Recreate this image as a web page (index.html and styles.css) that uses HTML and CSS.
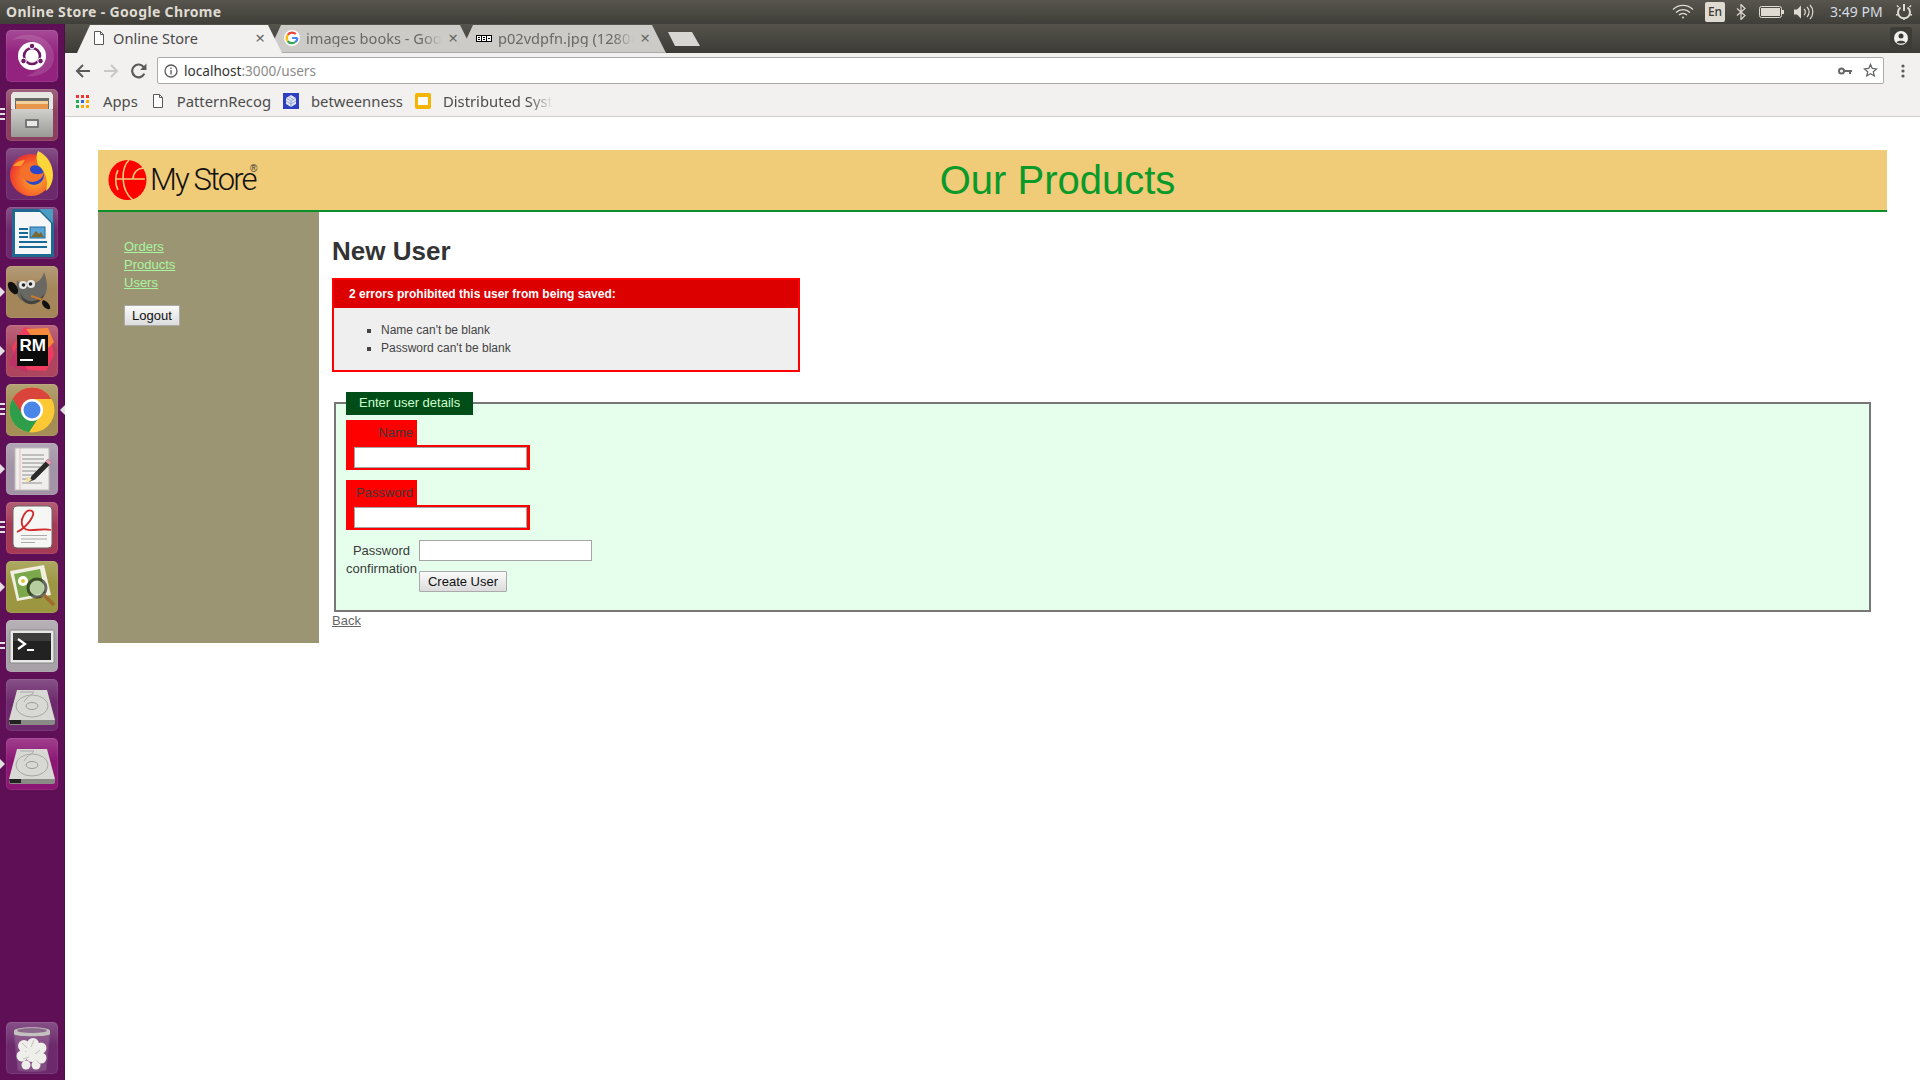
FILE: index.html
```html
<!DOCTYPE html>
<html lang="en">
<head>
<meta charset="utf-8">
<title>Online Store</title>
<link rel="stylesheet" href="styles.css">
</head>
<body>
<div class="screen">
  <header class="topbar">
    <span class="wintitle">Online Store - Google Chrome</span>
    <div class="tray">
      <svg class="t-wifi" width="22" height="16" viewBox="0 0 22 16" fill="none" stroke="#dfdbd2" stroke-width="1.3"><path d="M1 5.500a14 14 0 0 1 20 0"/><path d="M4 8.500a10 10 0 0 1 14 0"/><path d="M7 11a6 6 0 0 1 8 0"/><circle cx="11" cy="13.600" r="1" fill="#dfdbd2" stroke="none"/></svg>
      <span class="t-en">En</span>
      <svg class="t-bt" width="10" height="16" viewBox="0 0 10 16" fill="none" stroke="#dfdbd2" stroke-width="1.2"><path d="M1 4.500l8 7-4 4V.5l4 4-8 7"/></svg>
      <svg class="t-batt" width="25" height="12" viewBox="0 0 25 12"><rect x=".5" y=".5" width="22" height="11" rx="2" fill="none" stroke="#dfdbd2"/><rect x="2" y="2" width="19" height="8" fill="#dfdbd2"/><rect x="23" y="4" width="2" height="4" fill="#dfdbd2"/></svg>
      <svg class="t-vol" width="21" height="16" viewBox="0 0 21 16" fill="none" stroke="#dfdbd2" stroke-width="1.2"><path d="M1 5.500h3l4-4v13l-4-4H1z" fill="#dfdbd2" stroke="none"/><path d="M11 5a4 4 0 0 1 0 6M14 3a7 7 0 0 1 0 10M17 1a10 10 0 0 1 0 14"/></svg>
      <span class="t-time">3:49 PM</span>
      <svg class="t-gear" width="18" height="18" viewBox="0 0 18 18" fill="none" stroke="#dfdbd2" stroke-width="2"><path d="M5.500 4.500a6 6 0 1 0 7 0"/><path d="M9 1v7"/><path d="M2 2.500l1.500 1.500M16 2.500L14.500 4M1 12l2-.5M17 12l-2-.5M9 17v-2" stroke-width="1.600"/></svg>
    </div>
  </header>
  <div class="desktop">
    <nav class="dock">
      <div class="tile tile-ubuntu">
        <svg viewBox="0 0 52 52"><path d="M6 10C18 0 44 4 48 24 50 40 34 48 20 46 36 42 42 26 32 16 24 8 12 8 6 10Z" fill="#fff" opacity=".13"/><circle cx="26" cy="26" r="14" fill="#fff"/><circle cx="26" cy="26" r="8" fill="none" stroke="#6e1c66" stroke-width="2.600"/><circle cx="26" cy="16" r="2.800" fill="#6e1c66" stroke="#fff"/><circle cx="17.500" cy="31" r="2.800" fill="#6e1c66" stroke="#fff"/><circle cx="34.500" cy="31" r="2.800" fill="#6e1c66" stroke="#fff"/></svg>
      </div>
      <div class="tile tile-files has-pips-3">
        <svg viewBox="0 0 52 52"><defs><linearGradient id="cab" x1="0" y1="0" x2="0" y2="1"><stop offset="0" stop-color="#cfcfcb"/><stop offset="1" stop-color="#9a9a96"/></linearGradient></defs><path d="M7 3h38l2 3v14H5V6z" fill="#e6e6e2"/><rect x="9" y="9" width="34" height="11" fill="#6a6a66"/><rect x="10" y="12" width="32" height="3" fill="#f3cf9c"/><rect x="10" y="15" width="32" height="5" fill="#e8964c"/><rect x="5" y="20" width="42" height="28" rx="1.500" fill="url(#cab)"/><rect x="19" y="30" width="14" height="9" rx="1" fill="#777"/><rect x="21" y="32" width="10" height="5" fill="#e8e8e8"/></svg>
        <i class="pips"></i>
      </div>
      <div class="tile tile-fox">
        <svg viewBox="0 0 52 52"><defs><radialGradient id="ffx" cx=".6" cy=".6" r=".7"><stop offset="0" stop-color="#fdb32d"/><stop offset=".6" stop-color="#f5602a"/><stop offset="1" stop-color="#e8262f"/></radialGradient></defs><circle cx="25" cy="27" r="21" fill="url(#ffx)"/><path d="M32 3c9 4 15 13 15 24 0 7-3 13-7 16 3-10-1-21-8-26-2-5-2-10 0-14Z" fill="#ffd63a"/><circle cx="28" cy="27" r="10" fill="#2a47c8"/><path d="M14 22c4-8 12-8 16-5-6 0-7 4-5 7 3 3 10 3 13 0-1 8-10 12-16 9-5-2-8-6-8-11Z" fill="#f5702a"/><path d="M7 18c3-4 8-6 12-6l-4 6z" fill="#ff9b2f"/></svg>
      </div>
      <div class="tile tile-purple">
        <svg viewBox="0 0 52 52"><path d="M6 2h30l12 12v36H6z" fill="#1f6a92"/><path d="M33 2h14v14z" fill="#4a9cc0"/><path d="M9 5h25l11 11v31H9z" fill="#f4f6f8"/><g fill="#1a6a98"><rect x="13" y="21" width="9" height="2"/><rect x="13" y="25" width="9" height="2"/><rect x="13" y="29" width="9" height="2"/><rect x="13" y="34" width="28" height="2"/><rect x="13" y="39" width="28" height="2"/></g><rect x="24" y="20" width="15" height="11" fill="#5aa4d8" stroke="#1a6a98"/><path d="M25 30l5-6 3 3 2-2 3 5z" fill="#7a6a30"/></svg>
      </div>
      <div class="tile tile-gimp has-arrow">
        <svg viewBox="0 0 52 52"><path d="M11 14c2 4 6 3 10 3h8c4-1 8-6 9-11 3 8 4 15 2 21-3 7-10 11-18 10-6-1-11-5-12-12z" fill="#6a6862"/><path d="M14 26c3 8 10 11 17 8 3-1 5-3 7-6-1 7-8 11-15 10-5-1-8-5-9-12z" fill="#45433e"/><ellipse cx="7" cy="22" rx="4" ry="7" transform="rotate(-35 7 22)" fill="#111"/><circle cx="17" cy="19" r="4" fill="#e8e8e8"/><circle cx="25" cy="18" r="4" fill="#e8e8e8"/><circle cx="17.500" cy="19" r="1.800" fill="#222"/><circle cx="24.500" cy="18" r="1.800" fill="#222"/><path d="M25 30l12 4" stroke="#c87a30" stroke-width="2"/><path d="M37 34c4 1 8 5 7 9-4 1-8-3-8-7z" fill="#111"/></svg>
        <i class="arrow"></i>
      </div>
      <div class="tile tile-rm has-arrow">
        <svg viewBox="0 0 52 52"><path d="M6 22L18 2l26 6 4 22-8 16-28-2z" fill="#ef3b5d"/><path d="M20 4l22-1 6 14-10 10z" fill="#f58a3c"/><path d="M3 40l9-22 10 30z" fill="#c22a6a" opacity=".7"/><rect x="11" y="10" width="31" height="31" fill="#0b0b0b"/><text x="13.500" y="26" class="rm-text">RM</text><rect x="14" y="34" width="13" height="2" fill="#fff"/></svg>
        <i class="arrow"></i>
      </div>
      <div class="tile tile-chrome has-pips-3 has-active">
        <svg viewBox="0 0 52 52"><circle cx="26" cy="26" r="22.500" fill="#fcc934"/><path d="M26 3.500A22.500 22.500 0 0 0 6.500 14.800L15 30l11-15h19.500A22.500 22.500 0 0 0 26 3.500Z" fill="#d9453c"/><path d="M6.500 14.800A22.500 22.500 0 0 0 23 48.300L33 33H18z" fill="#2e9e4b"/><circle cx="26" cy="26" r="11" fill="#fff"/><circle cx="26" cy="26" r="8.500" fill="#4a86e8"/></svg>
        <i class="pips"></i><i class="active-arrow"></i>
      </div>
      <div class="tile tile-grey has-arrow">
        <svg viewBox="0 0 52 52"><rect x="9" y="5" width="34" height="42" fill="#efeeec" stroke="#bbb"/><path d="M14 5v42" stroke="#e8a0a0" stroke-width=".6"/><g stroke="#777" stroke-width=".8"><path d="M16 12h22M16 16h22M16 20h22M16 24h18M16 28h14M16 32h12M16 36h10M16 40h20"/></g><path d="M42 16l4 3.500-17 17-6 2.500 2.500-6z" fill="#2a2a2a"/><path d="M42 16l4 3.500-2.500 2.500-4-3.500z" fill="#e89ab0"/><path d="M21.500 33l-2.500 7 7-3z" fill="#f2e0a0"/></svg>
        <i class="arrow"></i>
      </div>
      <div class="tile tile-evince has-pips-3">
        <svg viewBox="0 0 52 52"><rect x="7" y="4" width="39" height="42" rx="4" fill="#f6f6f4" stroke="#666"/><path d="M11 30C20 26 31 12 26 9 20 6 13 18 17 25 22 32 35 25 45 28" fill="none" stroke="#d02a2a" stroke-width="1.800"/><path d="M15 33.500h26M15 37h26M15 40.500h14" stroke="#aaa" stroke-width="1"/></svg>
        <i class="pips"></i>
      </div>
      <div class="tile tile-olive has-arrow">
        <svg viewBox="0 0 52 52"><path d="M4 10L38 4l7 30-34 6z" fill="#f0efe0"/><path d="M8 13l26-5 5 24-26 5z" fill="#7aa84a"/><circle cx="17" cy="20" r="5" fill="#fff"/><circle cx="17" cy="20" r="2" fill="#e8c030"/><circle cx="31" cy="27" r="9" fill="#dfe8d8" opacity=".6" stroke="#111" stroke-width="3"/><path d="M38 34l10 10" stroke="#a06a30" stroke-width="3.500"/></svg>
        <i class="arrow"></i>
      </div>
      <div class="tile tile-term has-pips-2">
        <svg viewBox="0 0 52 52"><rect x="4" y="10" width="44" height="33" rx="1.500" fill="#e8e8e6" stroke="#888"/><rect x="7" y="13" width="38" height="27" fill="#222"/><rect x="7" y="13" width="38" height="8" fill="#3d3d3b"/><path d="M12 19l7 5-7 5" fill="none" stroke="#fff" stroke-width="2.200"/><path d="M21 30h7" stroke="#fff" stroke-width="2"/></svg>
        <i class="pips"></i>
      </div>
      <div class="tile tile-purple">
        <svg viewBox="0 0 52 52"><use href="#disk"/></svg>
      </div>
      <div class="tile tile-magenta has-arrow">
        <svg viewBox="0 0 52 52"><defs><g id="disk"><path d="M11 11h30l8 30H3z" fill="#d8d8d4"/><path d="M3 41h46v3a2 2 0 0 1-2 2H5a2 2 0 0 1-2-2z" fill="#8a8a86"/><path d="M3 41h12v4H4z" fill="#222"/><ellipse cx="26" cy="27" rx="16" ry="11" fill="none" stroke="#a8a8a4"/><ellipse cx="26" cy="27" rx="6" ry="3.500" fill="none" stroke="#999"/><path d="M14 13h14c-3 4-8 5-10 10" fill="none" stroke="#aaa"/></g></defs><use href="#disk"/></svg>
        <i class="arrow"></i>
      </div>
      <div class="dock-spacer"></div>
      <div class="tile tile-purple">
        <svg viewBox="0 0 52 52"><path d="M8 10h36l-4 38c-4 2-24 2-28 0z" fill="#fff" opacity=".16" stroke="#bbb"/><path d="M8 9c0-5 36-5 36 0v3c0 3-36 3-36 0z" fill="#c4c2bf"/><ellipse cx="26" cy="8.500" rx="15" ry="2.500" fill="#8c6a8c"/><g fill="#eeeeea"><circle cx="18" cy="24" r="6"/><circle cx="27" cy="22" r="6"/><circle cx="35" cy="26" r="5.500"/><circle cx="16" cy="34" r="5.500"/><circle cx="26" cy="33" r="7"/><circle cx="35" cy="36" r="5.500"/><circle cx="20" cy="43" r="4.500"/><circle cx="30" cy="43" r="4.500"/></g><path d="M16 21l5 5M28 18l-3 7M34 28l-5 4M17 37l6-2M31 39l3 3" fill="none" stroke="#b5b5b0" stroke-width=".8"/></svg>
      </div>
    </nav>
    <div class="browser">
      <div class="tabstrip">
        <div class="tab tab-active">
          <svg class="favicon" width="12" height="14" viewBox="0 0 12 14" fill="#fff" stroke="#5a5a5a"><path d="M1.500.5h6l3 3v10h-9z"/><path d="M7.500.5v3h3" fill="none"/></svg>
          <span class="tab-title">Online Store</span>
          <span class="tab-x">×</span>
        </div>
        <div class="tab">
          <svg class="favicon favicon-wide" width="16" height="16" viewBox="0 0 16 16"><circle cx="8" cy="8" r="8" fill="#fff"/><path d="M13.500 8H8.200" fill="none" stroke="#4285f4" stroke-width="2.200"/><path d="M13.400 8a5.500 5.500 0 0 1-2 4" fill="none" stroke="#4285f4" stroke-width="2.200"/><path d="M3.700 4.800A5.500 5.500 0 0 1 11.800 4" fill="none" stroke="#ea4335" stroke-width="2.200"/><path d="M3.700 4.800a5.500 5.500 0 0 0 0 6.400" fill="none" stroke="#fbbc05" stroke-width="2.200"/><path d="M3.700 11.200a5.500 5.500 0 0 0 7.700 .8" fill="none" stroke="#34a853" stroke-width="2.200"/></svg>
          <span class="tab-title">images books - Google</span>
          <span class="tab-x">×</span>
        </div>
        <div class="tab">
          <svg class="favicon favicon-wide" width="16" height="7" viewBox="0 0 16 7"><rect width="16" height="7" fill="#000"/><g fill="#fff"><rect x="1" y="1" width="4" height="5"/><rect x="6" y="1" width="4" height="5"/><rect x="11" y="1" width="4" height="5"/></g><g fill="#000"><rect x="2" y="2" width="2" height="1"/><rect x="2" y="4" width="2" height="1"/><rect x="7" y="2" width="2" height="1"/><rect x="7" y="4" width="2" height="1"/><rect x="12" y="3" width="2" height="1"/></g></svg>
          <span class="tab-title">p02vdpfn.jpg (1280×720)</span>
          <span class="tab-x">×</span>
        </div>
        <div class="newtab"></div>
        <div class="profile">
          <svg width="16" height="16" viewBox="0 0 16 16"><circle cx="8" cy="8" r="7" fill="#f2f1f0"/><circle cx="8" cy="6" r="2.500" fill="#3d3c37"/><path d="M3.500 12.500c1-2.500 8-2.500 9 0-2 1.500-7 1.500-9 0Z" fill="#3d3c37"/></svg>
        </div>
      </div>
      <div class="toolbar">
        <svg class="nav-back" width="16" height="14" viewBox="0 0 16 14" fill="none" stroke="#5a5a5a" stroke-width="2"><path d="M15 7H2M8 1L2 7l6 6"/></svg>
        <svg class="nav-fwd" width="16" height="14" viewBox="0 0 16 14" fill="none" stroke="#c8c8c8" stroke-width="2"><path d="M1 7h13M8 1l6 6-6 6"/></svg>
        <svg class="nav-reload" width="16" height="16" viewBox="0 0 15 15" fill="none" stroke="#5a5a5a" stroke-width="2"><path d="M12.500 10A6 6 0 1 1 12 4"/><path d="M14.500 0.500v6h-6z" fill="#5a5a5a" stroke="none"/></svg>
        <div class="omnibox">
          <svg class="omni-info" width="14" height="14" viewBox="0 0 14 14" fill="none" stroke="#5a5a5a" stroke-width="1.300"><circle cx="7" cy="7" r="6"/><path d="M7 6v4.500M7 3.500v1.500"/></svg>
          <span class="url"><span class="url-host">localhost</span>:3000/users</span>
          <svg class="omni-key" width="14" height="8" viewBox="0 0 14 8" fill="none" stroke="#666" stroke-width="2"><circle cx="3.500" cy="4" r="2.500"/><path d="M6 4h8M12 4v3" /></svg>
          <svg class="omni-star" width="15" height="15" viewBox="0 0 15 15" fill="none" stroke="#666" stroke-width="1.300"><path d="M7.500 1.500l1.800 4 4.300.4-3.300 2.900 1 4.200-3.800-2.300-3.800 2.300 1-4.200L1.400 5.900l4.300-.4z"/></svg>
        </div>
        <svg class="menu-dots" width="4" height="14" viewBox="0 0 4 14" fill="#5a5a5a"><circle cx="2" cy="2" r="1.600"/><circle cx="2" cy="7" r="1.600"/><circle cx="2" cy="12" r="1.600"/></svg>
      </div>
      <div class="bookmarks">
        <div class="bm bm-apps">
          <svg class="bm-icon bm-icon-wide" width="13" height="13" viewBox="0 0 13 13"><g fill="#e33"><rect width="3" height="3"/><rect x="5" width="3" height="3"/><rect x="10" width="3" height="3"/></g><rect y="5" width="3" height="3" fill="#2a5"/><rect x="5" y="5" width="3" height="3" fill="#36d"/><rect x="10" y="5" width="3" height="3" fill="#fa0"/><rect y="10" width="3" height="3" fill="#2a5"/><rect x="5" y="10" width="3" height="3" fill="#fa0"/><rect x="10" y="10" width="3" height="3" fill="#fa0"/></svg>
          <span>Apps</span>
        </div>
        <div class="bm">
          <svg class="bm-icon bm-icon-doc" width="12" height="14" viewBox="0 0 12 14" fill="#fff" stroke="#5a5a5a"><path d="M1.500.5h6l3 3v10h-9z"/><path d="M7.500.5v3h3" fill="none"/></svg>
          <span>PatternRecog</span>
        </div>
        <div class="bm">
          <svg class="bm-icon" width="16" height="16" viewBox="0 0 16 16"><rect width="16" height="16" fill="#2b3fc0"/><path d="M3 5l5-3 5 3v6l-5 3-5-3z" fill="#dfe6f2"/><path d="M3 5l5 3 5-3M8 8v6M5.500 3.500l5 3M3 8l5 3 5-3" fill="none" stroke="#7a8ac8" stroke-width=".7"/></svg>
          <span>betweenness</span>
        </div>
        <div class="bm">
          <svg class="bm-icon" width="16" height="16" viewBox="0 0 16 16"><rect width="16" height="16" rx="2" fill="#f4b400"/><rect x="3" y="4" width="10" height="8" fill="#fff"/></svg>
          <span class="bm-fade">Distributed Systems</span>
        </div>
      </div>
      <div class="page">
        <div class="store">
          <div class="banner">
            <div class="logo">
              <svg class="logo-mark" width="39" height="40" viewBox="0 0 39 40"><ellipse cx="19.500" cy="20" rx="19" ry="20" fill="#f00"/><path d="M21 0C13 8 12 30 25 40M8 19h29M37 8C29 8 25 13 25 19M10 10C7 15 7 25 10 30" fill="none" stroke="#f0cb78" stroke-width="1.600"/></svg>
              <span class="logo-text">My Store</span><sup class="logo-reg">®</sup>
            </div>
            <h1 class="banner-title">Our Products</h1>
          </div>
          <div class="body-row">
            <aside class="side">
              <a href="#">Orders</a>
              <a href="#">Products</a>
              <a href="#">Users</a>
              <button class="btn side-btn" type="button">Logout</button>
            </aside>
            <main class="main">
              <h2 class="page-title">New User</h2>
              <section class="errors">
                <h3 class="errors-head">2 errors prohibited this user from being saved:</h3>
                <ul class="errors-list">
                  <li>Name can't be blank</li>
                  <li>Password can't be blank</li>
                </ul>
              </section>
              <fieldset class="form-box">
                <legend class="form-legend">Enter user details</legend>
                <div class="bad-row">
                  <label class="bad-label">Name</label>
                  <div class="bad-input"><input class="field" type="text"></div>
                </div>
                <div class="bad-row">
                  <label class="bad-label">Password</label>
                  <div class="bad-input"><input class="field" type="password"></div>
                </div>
                <div class="ok-row">
                  <label class="ok-label">Password<br>confirmation</label>
                  <div class="ok-col">
                    <input class="field" type="password">
                    <button class="btn create-btn" type="button">Create User</button>
                  </div>
                </div>
              </fieldset>
              <a class="back" href="#">Back</a>
            </main>
          </div>
        </div>
      </div>
    </div>
  </div>
</div>
</body>
</html>
```
FILE: styles.css
```css
* { box-sizing: border-box; }
html, body { margin: 0; padding: 0; height: 100%; overflow: hidden; background: #fff; }
body { font-family: "Liberation Sans", Arial, sans-serif; font-size: 13px; line-height: 18px; color: #3a3a3a; }
.screen { width: 1920px; height: 1080px; display: flex; flex-direction: column; overflow: hidden; }

/* Top panel */
.topbar { height: 24px; flex: none; display: flex; align-items: center; justify-content: space-between; padding-left: 6px; background: linear-gradient(#57554d, #3f3e38); color: #dfdbd2; font-family: "Noto Sans", sans-serif; }
.wintitle { font-size: 14px; font-weight: 700; letter-spacing: .35px; }
.tray { display: flex; align-items: center; height: 24px; }
.t-wifi { margin-right: 11px; }
.t-en { width: 20px; height: 20px; background: #dfdbd2; color: #3c3b37; border-radius: 2px; font-size: 12px; line-height: 20px; text-align: center; font-weight: 500; margin-right: 11px; }
.t-bt { margin-right: 13px; }
.t-batt { margin-right: 9px; }
.t-vol { margin-right: 16px; }
.t-time { font-size: 14px; width: 65px; color: #d6dce2; white-space: nowrap; }
.t-gear { margin-right: 7px; }

/* Launcher */
.desktop { flex: 1; display: flex; min-height: 0; }
.dock { width: 65px; flex: none; background: #5e0f56; border-right: 1px solid #4c0c46; display: flex; flex-direction: column; align-items: flex-start; padding: 6px 0 6px 6px; gap: 7px; }
.dock-spacer { flex: 1; }
.tile { width: 52px; height: 52px; flex: none; border-radius: 5px; position: relative; box-shadow: inset 0 0 0 1px rgba(255,255,255,.08); }
.tile svg { display: block; width: 52px; height: 52px; position: relative; }
.tile::before { content: ""; position: absolute; inset: 0; border-radius: 5px; background: linear-gradient(rgba(255,255,255,.18), rgba(255,255,255,0) 45%); }
.tile-ubuntu { background: #93237f; }
.tile-files { background: #8c4060; }
.tile-fox { background: #6c2a6c; }
.tile-purple { background: #6c2a6c; }
.tile-gimp { background: #a4865a; }
.tile-rm { background: #ad4560; }
.tile-chrome { background: #a48e56; }
.tile-grey { background: #a393a6; }
.tile-evince { background: #a43a56; }
.tile-olive { background: #9c9640; }
.tile-term { background: #a8a2a8; }
.tile-magenta { background: #8b1674; }
.arrow { position: absolute; left: -6px; top: 21px; border-left: 5px solid #e4dfe2; border-top: 5px solid transparent; border-bottom: 5px solid transparent; }
.active-arrow { position: absolute; right: -7px; top: 21px; border-right: 5px solid #e4dfe2; border-top: 5px solid transparent; border-bottom: 5px solid transparent; }
.pips { position: absolute; left: -6px; top: 19px; width: 5px; height: 14px; background: repeating-linear-gradient(#e4dfe2 0 2px, transparent 2px 5px); }
.has-pips-2 .pips { height: 7px; top: 22px; }

/* Browser */
.browser { flex: 1; min-width: 0; display: flex; flex-direction: column; }
.tabstrip { height: 29px; flex: none; display: flex; align-items: flex-end; padding-left: 12px; background: linear-gradient(#55534b, #3c3b36); font-family: "Noto Sans", sans-serif; font-size: 14.600px; }
.tab { width: 206px; height: 28px; margin-right: -14px; position: relative; display: flex; align-items: center; padding: 0 14px 1px 16px; color: #6a6864; background: #cdcbc8; clip-path: polygon(0 100%, 13px 0, calc(100% - 14px) 0, 100% 100%); border-bottom: 1px solid #aaa; }
.tab-active { width: 205px; z-index: 2; color: #4a4a4a; background: #f2f1f0; border-bottom: 0; padding-bottom: 2px; padding-right: 15px; }
.favicon { flex: none; margin-right: 8px; }
.favicon-wide { margin-right: 6px; }
.tab-title { flex: 1; min-width: 0; white-space: nowrap; overflow: hidden; -webkit-mask-image: linear-gradient(90deg, #000 85%, transparent); mask-image: linear-gradient(90deg, #000 85%, transparent); }
.tab-active .tab-title { -webkit-mask-image: none; mask-image: none; }
.tab-x { flex: none; width: 14px; text-align: center; font-size: 17px; color: #666; margin-left: 4px; }
.newtab { width: 32px; height: 14px; margin: 0 0 7px 16px; background: #d8d6d3; flex: none; clip-path: polygon(0 0, 24px 0, 100% 100%, 7px 100%); }
.profile { margin: 0 8px 4px auto; width: 22px; height: 22px; border-radius: 3px; background: #3d3c37; display: flex; align-items: center; justify-content: center; }
.toolbar { height: 35px; flex: none; background: #f2f1f0; display: flex; align-items: center; padding-left: 10px; }
.nav-back { margin-right: 12px; }
.nav-fwd { margin-right: 12px; }
.nav-reload { margin-right: 10px; }
.omnibox { flex: 1; height: 27px; background: #fff; border: 1px solid #aaa; border-radius: 2px; display: flex; align-items: center; padding-left: 6px; font-family: "Noto Sans", sans-serif; font-size: 13.600px; color: #8a8a8a; }
.omni-info { margin-right: 6px; }
.url { flex: 1; }
.url-host { color: #333; }
.omni-key { margin-right: 11px; }
.omni-star { margin-right: 5px; }
.menu-dots { margin: 0 15px 0 17px; }
.bookmarks { height: 29px; flex: none; background: #f2f1f0; border-bottom: 1px solid #cfcfcf; display: flex; align-items: center; padding-left: 11px; padding-bottom: 2px; font-family: "Noto Sans", sans-serif; font-size: 14.800px; color: #4c4c4c; }
.bm { display: flex; align-items: center; margin-right: 12px; }
.bm-apps { margin-right: 14px; }
.bm-icon { flex: none; margin-right: 12px; }
.bm-icon-wide { margin-right: 14px; }
.bm-icon-doc { margin-right: 13px; }
.bm-fade { display: block; width: 110px; white-space: nowrap; overflow: hidden; -webkit-mask-image: linear-gradient(90deg, #000 78%, transparent); mask-image: linear-gradient(90deg, #000 78%, transparent); }

/* Store page */
.page { flex: 1; min-height: 0; background: #fff; padding: 33px 33px 0 33px; }
.banner { height: 62px; background: #f0cb78; border-bottom: 2px solid #0b8f2b; display: flex; align-items: center; }
.logo { width: 130px; flex: none; display: flex; align-items: center; padding-left: 10px; position: relative; }
.logo-mark { flex: none; margin-right: 3px; }
.logo-text { font-family: Roboto, sans-serif; font-weight: 300; font-size: 31px; line-height: 40px; letter-spacing: -1.900px; color: #111; white-space: nowrap; }
.logo-reg { position: absolute; left: 152px; top: 4px; font-size: 10px; line-height: 10px; color: #333; }
.banner-title { flex: 1; margin: 0; text-align: center; font-size: 40px; line-height: 46px; font-weight: 400; color: #0a9a2a; }
.body-row { display: flex; }
.side { width: 221px; flex: none; background: #9c9574; padding: 26px 0 0 26px; display: flex; flex-direction: column; align-items: flex-start; }
.side a { color: #a8f5a0; text-decoration: underline; }
.btn { font: 13px/15px "Liberation Sans", Arial, sans-serif; height: 21px; padding: 0 7px; border: 1px solid #aaa; border-radius: 1px; background: linear-gradient(#fafafa, #dcdcdc); color: #111; }
.side-btn { margin-top: 13px; }
.create-btn { width: 88px; }
.main { flex: 1; min-width: 0; padding: 0 16px 13px 13px; }
.page-title { margin: 24px 0 12px; font-size: 26px; line-height: 30px; font-weight: 700; color: #333; }
.errors { width: 468px; border: 2px solid #f00; background: #efefef; }
.errors-head { margin: 0; background: #d00; color: #fff; font-size: 12px; line-height: 28px; font-weight: 700; padding-left: 15px; }
.errors-list { margin: 0; padding: 13px 0 13px 47px; list-style: square; font-size: 12px; line-height: 18px; color: #444; }
.form-box { margin: 20px 0 0 2px; min-width: 0; padding: 5px 10px 18px; border: 2px solid #777; background: #e6ffec; }
.form-legend { padding: 2px 13px; margin-bottom: 1px; background: #004d17; box-shadow: 0 1px 0 #004d17; color: #ccffcc; font-size: 13px; line-height: 18px; }
.bad-row { margin-bottom: 10px; }
.bad-label { display: block; width: 71px; height: 25px; padding: 4px 4px 0 0; background: #f00; text-align: right; }
.bad-input { width: 184px; height: 25px; padding: 2px 3px 2px 8px; background: #f00; }
.field { display: block; width: 173px; height: 21px; padding: 0 2px; border: 1px solid #a5a5a5; background: #fff; border-radius: 0; }
.ok-row { display: flex; }
.ok-label { width: 73px; flex: none; padding: 2px 2px 0 0; text-align: center; }
.ok-col { display: flex; flex-direction: column; align-items: flex-start; gap: 10px; }
.back { color: #666; text-decoration: underline; display: block; width: fit-content; }
.rm-text { font: 700 17px "Liberation Sans", Arial, sans-serif; fill: #fff; }
```
